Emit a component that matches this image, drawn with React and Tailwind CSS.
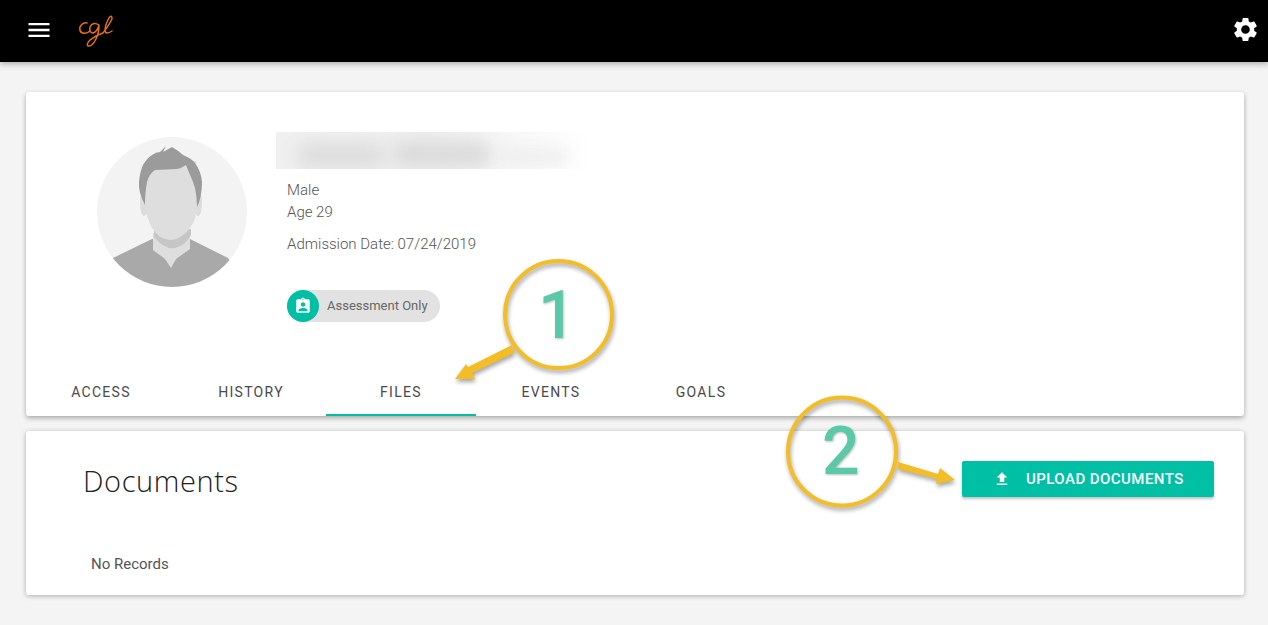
import React from 'react';

const tabs = ['ACCESS', 'HISTORY', 'FILES', 'EVENTS', 'GOALS'];

function Avatar() {
    return (
        <svg className="w-[150px] h-[150px] shrink-0" viewBox="0 0 150 150">
            <defs>
                <clipPath id="avatarClip"><circle cx="75" cy="75" r="75" /></clipPath>
            </defs>
            <g clipPath="url(#avatarClip)">
                <rect width="150" height="150" fill="#f3f3f3" />
                {/* shoulders */}
                <path d="M16 121 L55 102 L93 102 L131 121 L150 150 L0 150 Z" fill="#a9a9a9" />
                {/* neck */}
                <path d="M56 96 L56 113 L68 122 L74 131 L79 122 L93 112 L93 96 Z" fill="#dedede" />
                <path d="M57 100 Q68 113 78 111 Q88 109 94 98 L94 92 L57 92 Z" fill="#c6c6c6" />
                {/* ears */}
                <ellipse cx="47" cy="66" rx="4" ry="13" fill="#dcdcdc" />
                <ellipse cx="101" cy="66" rx="4" ry="13" fill="#dcdcdc" />
                {/* face */}
                <path d="M48 28 L99 24 L100 68 Q99 82 95 88 Q85 103 73 103 Q62 102 55 91 Q49 80 48 68 Z" fill="#dedede" />
                {/* hair */}
                <path d="M48 68 Q41 55 42 45 Q43 34 46 28 Q50 21 55 18 Q59 15 63 15 L69 9 L66 15 L75 10 Q82 14 86 18 Q94 21 98 26 Q104 34 105 45 Q105 60 100 70 Q100 60 98 51 Q96 44 93 38 L89 28 Q85 31 80 32 L58 33 Q52 37 50 45 Q48 55 48 68 Z" fill="#9b9b9b" />
            </g>
        </svg>
    );
}

function BlurredName() {
    return (
        <div className="w-[314px] h-[37px] bg-gradient-to-r from-[#f0f0f0] via-[#f0f0f0] to-white overflow-hidden flex items-center gap-[6px] pl-[20px]">
            <div className="w-[90px] h-[24px] mt-[8px] bg-[#dcdcdc] rounded-full blur-[9px]" />
            <div className="w-[100px] h-[26px] mt-[6px] bg-[#dadada] rounded-full blur-[9px]" />
            <div className="w-[70px] h-[14px] mt-[12px] bg-[#ececec] rounded-full blur-[8px]" />
        </div>
    );
}

// yellow call-out bubble with its arrow, sits over the cards
function Callout({ className, number, numberClass, arrow }) {
    return (
        <div className={`absolute ${className}`}>
            <svg className="absolute inset-0 w-full h-full overflow-visible drop-shadow-[1px_3px_2px_rgba(0,0,0,0.35)]">
                {arrow}
            </svg>
            <div className={`absolute font-['Roboto',sans-serif] font-medium text-[#5bc8a7] text-[66px] leading-none drop-shadow-[1px_1px_1px_rgba(0,0,0,0.25)] ${numberClass}`}>
                {number}
            </div>
        </div>
    );
}

export default function App() {
    return (
        <div className="relative w-full min-h-[625px] bg-[#f4f4f4] overflow-hidden font-['Roboto',sans-serif]">

            {/* ── Top bar ─────────────────────────────────────────────── */}
            <div className="h-[62px] bg-black flex items-center justify-between pb-[3px] pl-[25px] pr-[8px] shadow-[0_2px_6px_rgba(0,0,0,0.3)]">
                <div className="flex items-center gap-[26px]">
                    <svg className="w-[28px] h-[28px]" viewBox="0 0 24 24" fill="white">
                        <path d="M3 18h18v-2H3v2zm0-5h18v-2H3v2zm0-7v2h18V6H3z" />
                    </svg>
                    <svg className="w-[34px] h-[32px] mt-[2px]" viewBox="0 0 34 32" fill="none" stroke="#e8710f" strokeWidth="1.5" strokeLinecap="round">
                        <path d="M8 8 Q4 7 1 12 Q0 17 4 18 Q8 19 11 16" />
                        <path d="M20 10 Q14 6 11 12 Q10 18 14 18 Q18 17 20 10 Q20 18 17 24 Q13 32 9 31 Q7 29 11 25 Q17 20 24 18 Q30 10 33 4 Q33 -1 30 3 Q26 10 26 16 Q27 20 33 16" />
                    </svg>
                </div>
                <svg className="w-[29px] h-[29px]" viewBox="0 0 24 24" fill="white">
                    <path d="M19.14 12.94c.04-.3.06-.61.06-.94 0-.32-.02-.64-.07-.94l2.03-1.58c.18-.14.23-.41.12-.61l-1.92-3.32c-.12-.22-.37-.29-.59-.22l-2.39.96c-.5-.38-1.03-.7-1.62-.94l-.36-2.54c-.04-.24-.24-.41-.48-.41h-3.84c-.24 0-.43.17-.47.41l-.36 2.54c-.59.24-1.13.57-1.62.94l-2.39-.96c-.22-.08-.47 0-.59.22L2.74 8.87c-.12.21-.08.47.12.61l2.03 1.58c-.05.3-.09.63-.09.94s.02.64.07.94l-2.03 1.58c-.18.14-.23.41-.12.61l1.92 3.32c.12.22.37.29.59.22l2.39-.96c.5.38 1.03.7 1.62.94l.36 2.54c.05.24.24.41.48.41h3.84c.24 0 .44-.17.47-.41l.36-2.54c.59-.24 1.13-.56 1.62-.94l2.39.96c.22.08.47 0 .59-.22l1.92-3.32c.12-.22.07-.47-.12-.61l-2.01-1.58zM12 15.6c-1.98 0-3.6-1.62-3.6-3.6s1.62-3.6 3.6-3.6 3.6 1.62 3.6 3.6-1.62 3.6-3.6 3.6z" />
                </svg>
            </div>

            <div className="pl-[26px] pr-[24px] pt-[30px] flex flex-col gap-[15px]">

                {/* ── Profile card ─────────────────────────────────────── */}
                <div className="h-[324px] bg-white rounded-[3px] shadow-[0_2px_5px_rgba(0,0,0,0.32)] flex flex-col">
                    <div className="flex-1 flex pl-[71px] pt-[45px]">
                        <Avatar />
                        <div className="ml-[29px] -mt-[5px] flex flex-col">
                            <BlurredName />
                            <div className="ml-[11px] mt-[10px] text-[15px] font-light text-[#555] leading-[22px]">
                                <div>Male</div>
                                <div>Age 29</div>
                                <div className="mt-[10px]">Admission Date: 07/24/2019</div>
                            </div>
                            <div className="ml-[11px] mt-[35px] w-[153px] h-[32px] rounded-full bg-[#e2e2e2] flex items-center">
                                <div className="w-[32px] h-[32px] rounded-full bg-[#00bfa5] flex items-center justify-center">
                                    <svg className="w-[18px] h-[18px]" viewBox="0 0 24 24" fill="white">
                                        <path d="M19 3h-4.18C14.4 1.84 13.3 1 12 1s-2.4.84-2.82 2H5c-1.1 0-2 .9-2 2v14c0 1.1.9 2 2 2h14c1.1 0 2-.9 2-2V5c0-1.1-.9-2-2-2zm-7-.25c.41 0 .75.34.75.75s-.34.75-.75.75-.75-.34-.75-.75.34-.75.75-.75zM12 7c1.66 0 3 1.34 3 3s-1.34 3-3 3-3-1.34-3-3 1.34-3 3-3zm6 12H6v-1.4c0-2 4-3.1 6-3.1s6 1.1 6 3.1V19z" />
                                    </svg>
                                </div>
                                <span className="ml-[8px] text-[13px] text-[#666]">Assessment Only</span>
                            </div>
                        </div>
                    </div>
                    <div className="flex">
                        {tabs.map(tab => (
                            <div key={tab} className={`w-[150px] h-[48px] pt-[2px] flex items-center justify-center text-[14px] tracking-[1.3px] text-[#4a4a4a] border-b-2 ${tab === 'FILES' ? 'border-[#00bfa5]' : 'border-transparent'}`}>
                                {tab}
                            </div>
                        ))}
                    </div>
                </div>

                {/* ── Documents card ───────────────────────────────────── */}
                <div className="h-[164px] bg-white rounded-[3px] shadow-[0_1px_5px_rgba(0,0,0,0.3)] flex flex-col">
                    <div className="flex items-start justify-between pl-[57px] pr-[30px] pt-[30px]">
                        <h1 className="text-[29px] leading-[40px] font-light tracking-[0.6px] text-[#222] font-['Open_Sans',sans-serif]">Documents</h1>
                        <button className="w-[252px] h-[36px] bg-[#00bfa5] rounded-[2px] shadow-[0_2px_3px_rgba(0,0,0,0.25)] flex items-center pl-[31px] text-white text-[15px] font-medium tracking-[0.45px]">
                            <svg className="w-[18px] h-[18px]" viewBox="0 0 24 24" fill="white">
                                <path d="M9 16h6v-6h4l-7-7-7 7h4zm-4 2h14v2H5z" />
                            </svg>
                            <span className="ml-[15px]">UPLOAD DOCUMENTS</span>
                        </button>
                    </div>
                    <div className="ml-[65px] mt-[52px] text-[15px] text-[#555]">No Records</div>
                </div>
            </div>

            {/* ── Annotations ──────────────────────────────────────────── */}
            <Callout
                className="left-[450px] top-[255px] w-[170px] h-[130px]"
                number="1"
                numberClass="left-[88px] top-[28px]"
                arrow={
                    <>
                        <circle cx="108.5" cy="59.5" r="53.5" fill="none" stroke="#f4bd26" strokeWidth="4" />
                        <path d="M62 90 L18 112 L16 109 L5 124 L25 124 L22 118 L64 98 Z" fill="#f4bd26" />
                    </>
                }
            />
            <Callout
                className="left-[780px] top-[390px] w-[180px] h-[125px]"
                number="2"
                numberClass="left-[42px] top-[29px]"
                arrow={
                    <>
                        <circle cx="62" cy="61.5" r="54" fill="none" stroke="#f4bd26" strokeWidth="4" />
                        <path d="M118 72 L158 84 L160 78 L175 90 L156 94 L157 89 L118 79 Z" fill="#f4bd26" />
                    </>
                }
            />
        </div>
    );
}
